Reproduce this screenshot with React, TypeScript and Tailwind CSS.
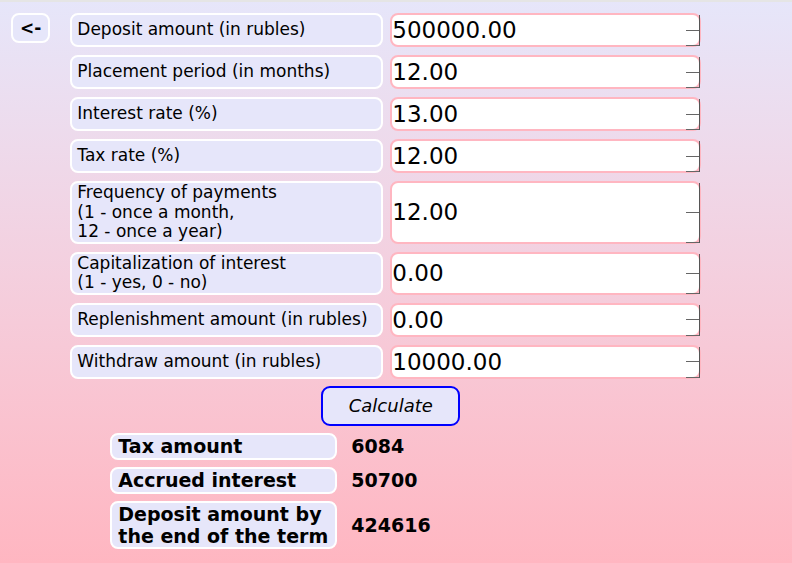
import React from 'react';

interface Field {
    id: string;
    label: React.ReactNode;
    value: string;
}

const fields: Field[] = [
    { id: 'deposit', label: 'Deposit amount (in rubles)', value: '500000.00' },
    { id: 'period', label: 'Placement period (in months)', value: '12.00' },
    { id: 'rate', label: 'Interest rate (%)', value: '13.00' },
    { id: 'tax', label: 'Tax rate (%)', value: '12.00' },
    {
        id: 'frequency',
        label: (
            <>
                Frequency of payments
                <br />
                (1 - once a month,
                <br />
                12 - once a year)
            </>
        ),
        value: '12.00',
    },
    {
        id: 'capitalization',
        label: (
            <>
                Capitalization of interest
                <br />
                (1 - yes, 0 - no)
            </>
        ),
        value: '0.00',
    },
    { id: 'replenishment', label: 'Replenishment amount (in rubles)', value: '0.00' },
    { id: 'withdraw', label: 'Withdraw amount (in rubles)', value: '10000.00' },
];

const results = [
    { id: 'taxAmount', label: 'Tax amount', value: '6084' },
    { id: 'interest', label: 'Accrued interest', value: '50700' },
    {
        id: 'total',
        label: (
            <>
                Deposit amount by
                <br />
                the end of the term
            </>
        ),
        value: '424616',
    },
];

// Old-style number spinner drawn next to the value
const Spinner: React.FC = () => (
    <div className="pointer-events-none absolute top-[2px] right-[1px] bottom-[1px] flex w-[14px] flex-col border-r border-[#555]">
        <div className="flex-1 border-b border-b-[#666]" />
        <div className="flex-1 border-b border-b-[#666]" />
    </div>
);

const App: React.FC = () => {
    return (
        <div className="min-h-[563px] w-full bg-linear-to-b from-[#e6e6fa] to-[#ffb6c1] font-['DejaVu_Sans',sans-serif] text-[17px] leading-[20px] text-black">
            <div className="h-[2px] bg-[#e5e5e5]" />
            <div className="flex items-start pt-[11px]">
                {/* Back button */}
                <button className="ml-[11px] rounded-[8px] border-2 border-white bg-[#e6e6fa] px-[7px] py-[3px] font-bold">
                    &lt;-
                </button>

                <div className="ml-[20px] flex flex-col">
                    {/* Input rows */}
                    <div className="flex flex-col gap-[8px]">
                        {fields.map((f) => (
                            <div key={f.id} className="flex items-stretch gap-[7px]">
                                <div className="flex w-[313px] items-center rounded-[8px] border-2 border-white bg-[#e6e6fa] px-[5px] leading-[19.5px]">
                                    <span>{f.label}</span>
                                </div>
                                <div className="relative flex w-[311px]">
                                    <input
                                        type="text"
                                        defaultValue={f.value}
                                        className="min-h-[34px] w-full rounded-[8px] border-2 border-[#ffb6c1] bg-white pr-[18px] pl-0 text-[23px]"
                                    />
                                    <Spinner />
                                </div>
                            </div>
                        ))}
                    </div>

                    {/* Calculate */}
                    <button className="mt-[7px] ml-[251px] h-[40px] w-[139px] rounded-[9px] border-2 border-[#0000ff] bg-[#e6e6fa] text-[18px] italic">
                        Calculate
                    </button>

                    {/* Results */}
                    <div className="mt-[7px] ml-[40px] flex flex-col gap-[7px]">
                        {results.map((r) => (
                            <div key={r.id} className="flex items-center gap-[14px] text-[19px] leading-[22px] font-bold">
                                <div className="flex min-h-[27px] w-[227px] items-center rounded-[8px] border-2 border-white bg-[#e6e6fa] px-[6px]">
                                    <span>{r.label}</span>
                                </div>
                                <span>{r.value}</span>
                            </div>
                        ))}
                    </div>
                </div>
            </div>
        </div>
    );
};

export default App;
